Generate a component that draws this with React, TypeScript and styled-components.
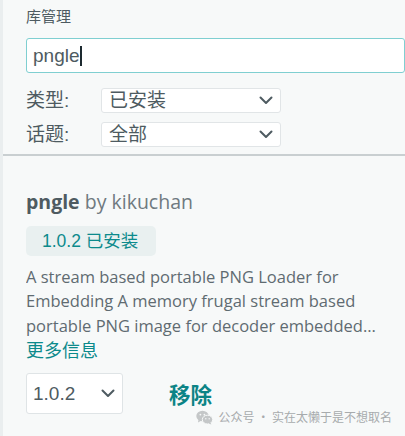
import styled, { createGlobalStyle } from 'styled-components';

const GlobalStyle = createGlobalStyle`
    html, body {
        margin: 0;
        padding: 0;
        background: #f7f9f9;
    }
    body {
        font-family: "Open Sans", "Noto Sans CJK SC", sans-serif;
        color: #4e5b61;
    }
`;

const Chevron = () => (
    <svg width="14" height="9" viewBox="0 0 14 9" fill="none">
        <path d="M1.5 1.5 L7 7 L12.5 1.5" stroke="#4e5b61" strokeWidth="2" strokeLinecap="round" strokeLinejoin="round" />
    </svg>
);

const WeChatIcon = () => (
    <svg width="17" height="15" viewBox="0 0 17 15">
        <ellipse cx="6.5" cy="6" rx="6.2" ry="5.3" fill="#c4c7c8" />
        <path d="M2.5 9.5 L2 12.5 L5 10.8 Z" fill="#c4c7c8" />
        <ellipse cx="11.5" cy="9.6" rx="5.2" ry="4.4" fill="#c4c7c8" stroke="#f7f9f9" strokeWidth="1" />
        <path d="M14.5 12.5 L15.3 14.6 L12.6 13.4 Z" fill="#c4c7c8" />
        <circle cx="4.4" cy="4.6" r="0.9" fill="#f7f9f9" />
        <circle cx="8.4" cy="4.6" r="0.9" fill="#f7f9f9" />
        <circle cx="9.8" cy="8.8" r="0.7" fill="#f7f9f9" />
        <circle cx="13.2" cy="8.8" r="0.7" fill="#f7f9f9" />
    </svg>
);

const App = () => {
    return (
        <>
            <GlobalStyle />
            <Page>
                <Gutter />
                <Panel>
                    <Header>
                        <Title>库管理</Title>
                        <SearchBox>
                            <SearchText>pngle</SearchText>
                            <Caret />
                        </SearchBox>
                        <FilterRow>
                            <FilterLabel>类型:</FilterLabel>
                            <FilterSelect>
                                <span>已安装</span>
                                <Chevron />
                            </FilterSelect>
                        </FilterRow>
                        <FilterRow>
                            <FilterLabel>话题:</FilterLabel>
                            <FilterSelect>
                                <span>全部</span>
                                <Chevron />
                            </FilterSelect>
                        </FilterRow>
                    </Header>
                    <Divider />
                    <Card>
                        <LibTitle>
                            <LibName>pngle</LibName> by kikuchan
                        </LibTitle>
                        <Badge>1.0.2 已安装</Badge>
                        <Description>
                            A stream based portable PNG Loader for Embedding A memory frugal stream based
                            portable PNG image for decoder embedded systems
                        </Description>
                        <MoreInfo>更多信息</MoreInfo>
                        <Actions>
                            <VersionSelect>
                                <span>1.0.2</span>
                                <Chevron />
                            </VersionSelect>
                            <RemoveButton>移除</RemoveButton>
                        </Actions>
                        <Watermark>
                            <WeChatIcon />
                            <span>公众号 · 实在太懒于是不想取名</span>
                        </Watermark>
                    </Card>
                </Panel>
            </Page>
        </>
    );
};

const Page = styled.div`
    display: flex;
    width: 405px;
    height: 436px;
    overflow: hidden;
`;

const Gutter = styled.div`
    width: 3px;
    flex-shrink: 0;
    background: #eaeeef;
`;

const Panel = styled.div`
    flex: 1;
    display: flex;
    flex-direction: column;
`;

const Header = styled.div`
    padding: 6px 0 7px 23px;
    display: flex;
    flex-direction: column;
`;

const Title = styled.div`
    font-family: "Noto Sans CJK SC", sans-serif;
    font-size: 15px;
    line-height: 20px;
    height: 20px;
    margin-bottom: 12px;
`;

const SearchBox = styled.div`
    display: flex;
    align-items: center;
    height: 35px;
    box-sizing: border-box;
    border: 1px solid #7fcfd1;
    border-radius: 3px;
    background: #fff;
    padding: 0 7px 0 6px;
    margin-bottom: 15px;
`;

const SearchText = styled.span`
    font-family: "Liberation Sans", Arial, sans-serif;
    font-size: 19px;
    color: #4e5b61;
`;

const Caret = styled.span`
    width: 1.5px;
    height: 20px;
    margin-left: 0.5px;
    background: #1d2a30;
`;

const FilterRow = styled.div`
    display: flex;
    align-items: center;
    height: 25px;
    margin-bottom: 9px;

    &:last-child {
        margin-bottom: 0;
    }
`;

const FilterLabel = styled.div`
    width: 75px;
    font-family: "Liberation Sans", "Noto Sans CJK SC", sans-serif;
    font-size: 19px;
    line-height: 25px;
`;

const FilterSelect = styled.div`
    width: 180px;
    height: 25px;
    box-sizing: border-box;
    display: flex;
    align-items: center;
    justify-content: space-between;
    padding: 0 7px 0 7px;
    background: #fff;
    border: 1px solid #e1e5e7;
    border-radius: 3px;
    font-family: "Liberation Sans", "Noto Sans CJK SC", sans-serif;
    font-size: 19px;
    line-height: 23px;
`;

const Divider = styled.div`
    height: 2px;
    background: #c9cfd1;
`;

const Card = styled.div`
    padding: 33px 0 0 23px;
    display: flex;
    flex-direction: column;
    align-items: flex-start;
`;

const LibTitle = styled.div`
    font-size: 19.5px;
    line-height: 26px;
    color: #6f7a80;
    margin-bottom: 11px;
`;

const LibName = styled.span`
    font-weight: 700;
    color: #4e5b61;
`;

const Badge = styled.div`
    padding: 0 16px;
    width: 130px;
    box-sizing: border-box;
    height: 30px;
    line-height: 30px;
    border-radius: 5px;
    background: #e9f0f0;
    color: #0c8a8c;
    font-family: "Liberation Sans", "Noto Sans CJK SC", sans-serif;
    font-size: 17.5px;
    white-space: nowrap;
    margin-bottom: 8.5px;
`;

const Description = styled.div`
    width: 374px;
    font-size: 16.5px;
    line-height: 24.5px;
    color: #5f6b71;
    display: -webkit-box;
    -webkit-line-clamp: 3;
    -webkit-box-orient: vertical;
    overflow: hidden;
`;

const MoreInfo = styled.div`
    font-family: "Noto Sans CJK SC", sans-serif;
    font-size: 18px;
    line-height: 22px;
    color: #0c8a8c;
    margin-bottom: 13px;
`;

const Actions = styled.div`
    display: flex;
    align-items: center;
    gap: 46px;
`;

const VersionSelect = styled.div`
    width: 97px;
    height: 41px;
    box-sizing: border-box;
    display: flex;
    align-items: center;
    justify-content: space-between;
    padding: 0 7px 0 6px;
    background: #fff;
    border: 1px solid #dfe4e6;
    border-radius: 3px;
    font-family: "Liberation Sans", Arial, sans-serif;
    font-size: 19px;
`;

const RemoveButton = styled.div`
    font-family: "Noto Sans CJK SC", sans-serif;
    font-size: 21.5px;
    font-weight: 700;
    line-height: 28px;
    color: #0c8486;
`;

const Watermark = styled.div`
    align-self: flex-end;
    margin: -5px 13px 0 0;
    display: flex;
    align-items: center;
    gap: 6px;
    font-family: "Noto Sans CJK SC", sans-serif;
    font-size: 12px;
    line-height: 16px;
    color: #a7abad;
`;

export default App;
